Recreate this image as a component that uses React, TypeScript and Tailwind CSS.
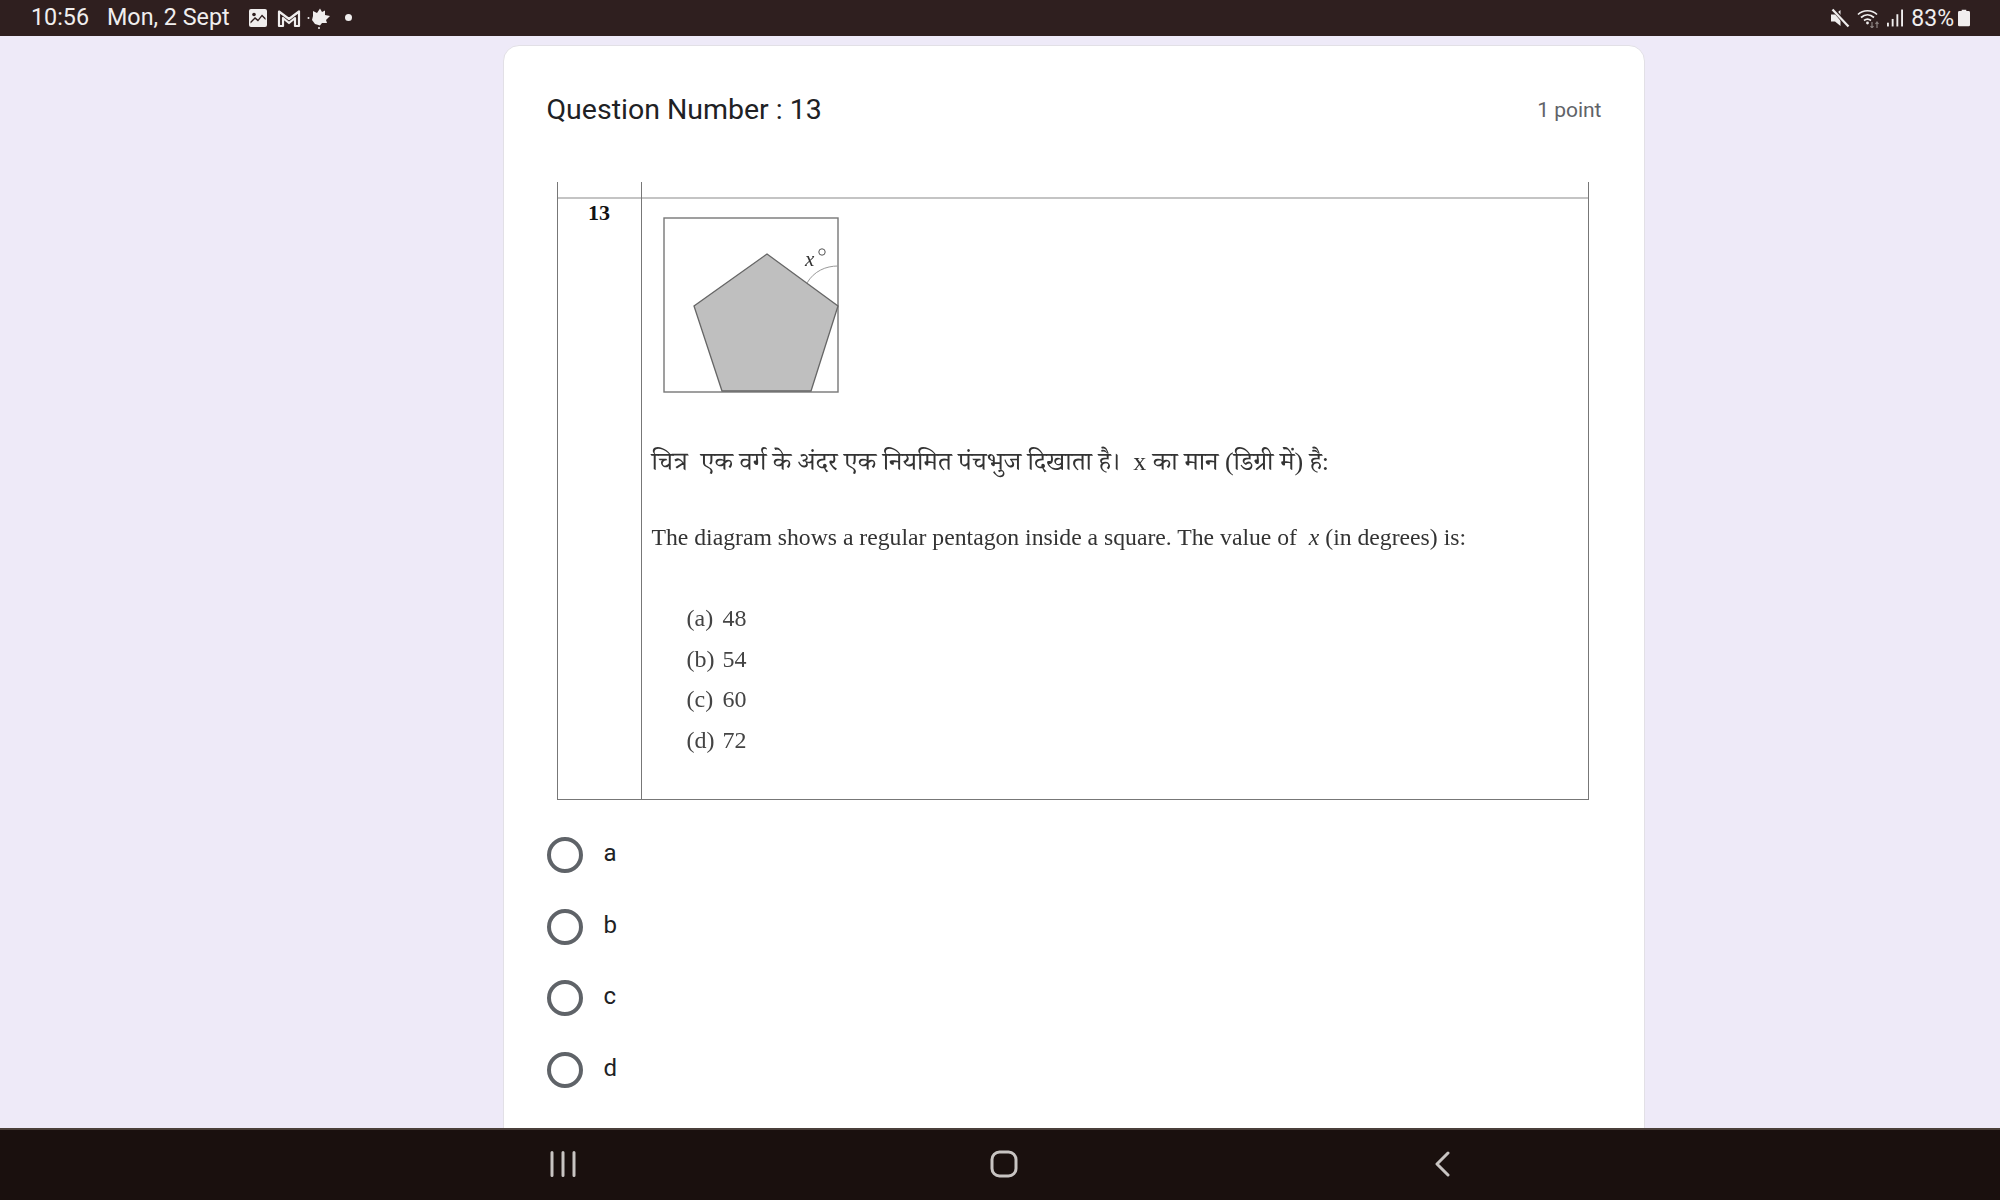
function StatusIcons() {
  return (
    <div className="flex items-center">
      <svg width="20" height="20" viewBox="0 0 20 20" className="ml-[18px]">
        <rect x="1" y="1" width="18" height="18" rx="2" fill="#f0eeee" />
        <circle cx="6" cy="6.5" r="1.8" fill="#2f1f1f" />
        <path d="M2.5 15.5 L7 11 L10 13.5 L14 8.5 L17.5 12 L17.5 10 L14 6.5 L10 11.5 L7 9 L2.5 13.5 Z" fill="#2f1f1f" />
      </svg>
      <svg width="24" height="20" viewBox="0 0 24 20" className="ml-[9px]">
        <path d="M2 18 V3.5 L12 11 L22 3.5 V18 H18 V10 L12 15 L6 10 V18 Z" fill="none" stroke="#f0eeee" strokeWidth="2.2" strokeLinejoin="round" />
      </svg>
      <svg width="24" height="22" viewBox="0 0 24 22" className="ml-[6px]">
        <path d="M6 4 L10 6 L13 1.5 L15 5 L18 3.5 L18 8 L23 9 L19 13 L20 16 L15 16 L13 18.5 L8 17 L5 13 L6 9 Z" fill="#f0eeee" />
        <circle cx="1.5" cy="11" r="1" fill="#f0eeee" />
        <circle cx="12" cy="21" r="1" fill="#f0eeee" />
      </svg>
      <div className="ml-[14px] h-[7px] w-[7px] rounded-full bg-[#f0eeee]" />
    </div>
  )
}

function RightIcons() {
  return (
    <div className="flex items-center">
      <svg width="20" height="20" viewBox="0 0 20 20">
        <path d="M1 6.5 H5 L10.5 2 V18 L5 13.5 H1 Z" fill="#f0eeee" />
        <path d="M4 2 L18 18.5" stroke="#2f1f1f" strokeWidth="4" />
        <path d="M2.5 1.5 L18.5 18.5" stroke="#f0eeee" strokeWidth="2.2" />
      </svg>
      <svg width="24" height="20" viewBox="0 0 24 20" className="ml-[7px]">
        <g fill="none" stroke="#f0eeee" strokeWidth="1.7">
          <path d="M1 6.5 C6 1.5 15 1.5 20 6.5" />
          <path d="M4 9.5 C8 6 13 6 17 9.5" />
          <path d="M7 12.5 C9 11 12 11 14 12.5" />
        </g>
        <circle cx="10.5" cy="15" r="1.4" fill="#f0eeee" />
        <path d="M15 14 V20 M13.5 18 L15 20 L16.5 18 M20 20 V14 M18.5 16 L20 14 L21.5 16" fill="none" stroke="#8a8280" strokeWidth="1.2" />
      </svg>
      <svg width="16" height="18" viewBox="0 0 17 18" className="ml-[6px]">
        <rect x="0" y="14" width="2" height="4" fill="#f0eeee" />
        <rect x="5" y="10" width="2" height="8" fill="#f0eeee" />
        <rect x="10" y="5" width="2" height="13" fill="#f0eeee" />
        <rect x="15" y="0" width="2" height="18" fill="#f0eeee" />
      </svg>
      <span className="ml-[8px] text-[23px] leading-none text-[#f0eeee]">83%</span>
      <svg width="12" height="18" viewBox="0 0 13 18" className="ml-[4px]">
        <path d="M4 0 H9 V1.5 H11.5 Q13 1.5 13 3 V16.5 Q13 18 11.5 18 H1.5 Q0 18 0 16.5 V3 Q0 1.5 1.5 1.5 H4 Z" fill="#f0eeee" />
      </svg>
    </div>
  )
}

function Pentagon() {
  return (
    <svg width="176" height="176" viewBox="0 0 176 176" className="blur-[0.4px]">
      <rect x="1" y="1" width="174" height="174" fill="#fff" stroke="#777" strokeWidth="1.4" />
      <path d="M104 37 L175 89 L148 174 L59 174 L31 89 Z" fill="#bfbfbf" stroke="#666" strokeWidth="1.3" />
      <path d="M144 66 C151 54 163 49 175 49" fill="none" stroke="#999" strokeWidth="1" />
      <text x="142" y="49" fontFamily="'Liberation Serif', serif" fontStyle="italic" fontSize="21" fill="#333">x</text>
      <circle cx="159" cy="35" r="3.2" fill="none" stroke="#555" strokeWidth="1" />
    </svg>
  )
}

const OPTIONS = ['a', 'b', 'c', 'd']
const ANSWERS = [
  ['(a)', '48'],
  ['(b)', '54'],
  ['(c)', '60'],
  ['(d)', '72'],
]

export default function App() {
  return (
    <div className="flex h-[1200px] w-[2000px] flex-col overflow-hidden bg-[#eeeaf8] font-['Roboto',sans-serif]">
      <div className="flex h-9 shrink-0 items-center justify-between bg-[#2f1f1f] pl-[31px] pr-[30px]">
        <div className="flex items-center text-[23.3px] leading-none text-[#f0eeee]">
          <span>10:56</span>
          <span className="ml-[18px]">Mon, 2 Sept</span>
          <StatusIcons />
        </div>
        <RightIcons />
      </div>

      <div className="flex min-h-0 flex-1 justify-center overflow-hidden pt-[9px]">
        <div className="ml-[149px] mr-[2px] h-[1200px] w-[1142px] rounded-t-[16px] border border-[#e2e0e6] bg-white pl-[43px] pr-[42px] pt-[46px]">
          <div className="flex items-center justify-between">
            <h1 className="text-[28.5px] font-normal leading-[36px] text-[#202124]">Question Number : 13</h1>
            <span className="translate-y-[1px] text-[21px] text-[#5f6368]">1 point</span>
          </div>

          <div className="ml-[10px] mt-[54px] flex h-[618px] w-[1032px] border-x-[1.5px] border-b-[1.5px] border-x-[#777] border-b-[#777] font-['Liberation_Serif','Noto_Serif_Devanagari','Noto_Sans_Devanagari',serif] text-[#333]">
            <div className="w-[84px] shrink-0 border-r-[1.5px] border-r-[#777]">
              <div className="h-[17px] border-b-2 border-[#c4c4c4]" />
              <div className="pt-[2px] text-center text-[22px] font-bold leading-6 text-[#111]">13</div>
            </div>
            <div className="flex-1">
              <div className="h-[17px] border-b-2 border-[#c4c4c4]" />
              <div className="pl-[21px] pt-[18px]">
                <Pentagon />
              </div>
              <div className="pl-[10px] pt-[53px] leading-[32px] blur-[0.3px]">
                <p className="text-[26px]">चित्र&nbsp; एक वर्ग के अंदर एक नियमित पंचभुज दिखाता है।&nbsp; x का मान (डिग्री में) है:</p>
                <p className="mt-[43px] text-[23.7px]">
                  The diagram shows a regular pentagon inside a square. The value of&nbsp; <i>x</i> (in degrees) is:
                </p>
              </div>
              <div className="flex flex-col gap-[12.5px] pl-[45px] pt-[51px] text-[24px] leading-[28px] text-[#444] blur-[0.3px]">
                {ANSWERS.map(([label, value]) => (
                  <div key={label} className="flex">
                    <span className="w-[36px]">{label}</span>
                    <span>{value}</span>
                  </div>
                ))}
              </div>
            </div>
          </div>

          <div className="mt-[37px] flex flex-col gap-[35.5px]">
            {OPTIONS.map((opt) => (
              <div key={opt} className="flex h-9 items-center">
                <div className="h-9 w-9 rounded-full border-4 border-[#5f6368]" />
                <span className="ml-[21px] -translate-y-[2px] text-[24px] leading-none text-[#202124]">{opt}</span>
              </div>
            ))}
          </div>
        </div>
      </div>

      <div className="relative z-10 flex h-[72px] shrink-0 items-center border-t-2 border-[#4a3f3a] bg-[#1a100e] pb-[2px] pl-[549px]">
        <svg width="28" height="26" viewBox="0 0 28 26">
          <path d="M3 1.5 V24.5 M14 1.5 V24.5 M25 1.5 V24.5" stroke="#c8c4c2" strokeWidth="3" strokeLinecap="round" />
        </svg>
        <svg width="28" height="28" viewBox="0 0 28 28" className="ml-[413px]">
          <rect x="2" y="2" width="24" height="24" rx="7.5" fill="none" stroke="#c8c4c2" strokeWidth="3" />
        </svg>
        <svg width="16" height="26" viewBox="0 0 16 26" className="ml-[416px]">
          <path d="M14 2 L3 13 L14 24" fill="none" stroke="#c8c4c2" strokeWidth="3" strokeLinecap="round" strokeLinejoin="round" />
        </svg>
      </div>
    </div>
  )
}
